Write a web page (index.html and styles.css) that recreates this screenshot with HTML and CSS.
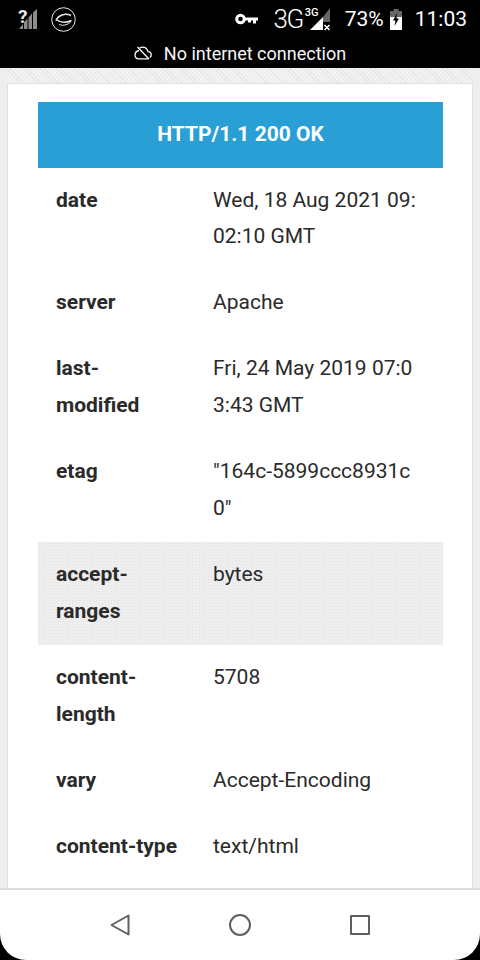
FILE: index.html
```html
<!DOCTYPE html>
<html lang="en">
<head>
    <meta charset="UTF-8">
    <meta name="viewport" content="width=device-width, initial-scale=1.0">
    <title>HTTP headers</title>
    <link rel="stylesheet" href="styles.css">
</head>
<body>
    <div class="phone">
        <div class="top-bar">
            <div class="status-bar">
                <div class="status-left">
                    <div class="signal-grey">
                        <svg width="18" height="20" viewBox="0 0 18 20">
                            <path d="M0 20 L4 15 V20zM5 20V13.500L8.500 9.500V20zM9.500 20V8.500L13 4.500V20zM14 20V3.500L18 0V20z" fill="#8c8c8c"/>
                        </svg>
                        <span class="unknown-mark">?</span>
                    </div>
                    <svg class="planet" width="25" height="25" viewBox="0 0 25 25" fill="none" stroke="#e8e8e8">
                        <circle cx="12.500" cy="12.500" r="11.800" stroke-width="1"/>
                        <path d="M5 13.500C7 8.500 14 5.500 20 8.500" stroke-width="1.500"/>
                        <path d="M5 12.500c4 3 10 3.500 15.500 1" stroke-width="1.500"/>
                        <path d="M8 17.500c4 1.500 9 .5 12-3" stroke-width="1"/>
                    </svg>
                </div>
                <div class="status-right">
                    <svg class="key" width="23" height="12" viewBox="0 0 23 12">
                        <circle cx="5.500" cy="6" r="3.800" fill="none" stroke="#fff" stroke-width="3"/>
                        <path d="M9 4.500h14v3h-2v3h-3v-3h-2v2h-3v-2H9z" fill="#fff"/>
                    </svg>
                    <span class="net-label">3G</span>
                    <div class="net-signal">
                        <span class="net-small">3G</span>
                        <svg width="24" height="28" viewBox="0 0 24 28">
                            <path d="M1 25 L14 12 V25Z" fill="#fff"/>
                            <path d="M14 12 L21 3 V17 H14Z" fill="#666"/>
                            <path d="M15.500 20l5 5M20.500 20l-5 5" stroke="#fff" stroke-width="1.600"/>
                        </svg>
                    </div>
                    <span class="battery-pct">73%</span>
                    <svg class="battery" width="12" height="21" viewBox="0 0 12 21">
                        <path d="M3.500 0h5v2H12v6H0V2h3.500z" fill="#666"/>
                        <path d="M0 8h12v13H0z" fill="#fff"/>
                        <path d="M7 4 L3 11.500h2.500L4.500 17 9 9.500H6.500z" fill="#000"/>
                    </svg>
                    <span class="clock">11:03</span>
                </div>
            </div>
            <div class="offline-bar">
                <svg width="18" height="14" viewBox="0 0 18 14" fill="none" stroke="#fff" stroke-width="1.300">
                    <path d="M5 4.500C3 5 1 6.500 1 9c0 2.300 1.800 3.800 4 3.800h9.500M16 11.500c.7-.6 1.200-1.400 1.200-2.500 0-1.800-1.500-3.200-3.200-3.300C13.300 3 11 1.200 8.500 1.200c-1 0-2 .3-2.800.8"/>
                    <path d="M3.500 1l11.500 12"/>
                </svg>
                <span>No internet connection</span>
            </div>
        </div>

        <div class="page">
            <div class="page-strip"></div>
            <div class="card">
                <table class="headers">
                    <colgroup>
                        <col class="name-col">
                        <col>
                    </colgroup>
                    <thead>
                        <tr><th colspan="2" class="response-line">HTTP/1.1 200 OK</th></tr>
                    </thead>
                    <tbody>
                        <tr><th>date</th><td>Wed, 18 Aug 2021 09:02:10 GMT</td></tr>
                        <tr><th>server</th><td>Apache</td></tr>
                        <tr><th>last-modified</th><td>Fri, 24 May 2019 07:03:43 GMT</td></tr>
                        <tr><th>etag</th><td>"164c-5899ccc8931c0"</td></tr>
                        <tr class="active"><th>accept-ranges</th><td>bytes</td></tr>
                        <tr><th>content-length</th><td>5708</td></tr>
                        <tr><th>vary</th><td>Accept-Encoding</td></tr>
                        <tr><th>content-type</th><td>text/html</td></tr>
                    </tbody>
                </table>
            </div>
        </div>

        <div class="nav-bar">
            <svg width="20" height="22" viewBox="0 0 20 22" fill="none" stroke="#5f5f5f" stroke-width="2" stroke-linejoin="round">
                <path d="M18.500 1.500v19L1.500 11z"/>
            </svg>
            <svg width="22" height="22" viewBox="0 0 22 22" fill="none" stroke="#5f5f5f" stroke-width="2">
                <circle cx="11" cy="11" r="10"/>
            </svg>
            <svg width="20" height="20" viewBox="0 0 20 20" fill="none" stroke="#5f5f5f" stroke-width="2" stroke-linejoin="round">
                <path d="M1 1h18v18H1z"/>
            </svg>
        </div>
    </div>
</body>
</html>
```

FILE: styles.css
```css
* {
    box-sizing: border-box;
}
html, body {
    margin: 0;
    padding: 0;
    background-color: #000000;
}
body {
    font-family: Roboto, "Liberation Sans", sans-serif;
}
.phone {
    width: 480px;
    height: 960px;
    display: flex;
    flex-direction: column;
    overflow: hidden;
    background-color: #000000;
}

/* status bar */
.top-bar {
    height: 68px;
    flex: none;
    background-color: #000000;
    color: #ffffff;
}
.status-bar {
    height: 38px;
    display: flex;
    justify-content: space-between;
    align-items: center;
    padding: 0 13px 0 19px;
}
.status-left, .status-right, .net-signal {
    display: flex;
    align-items: center;
}
.signal-grey {
    position: relative;
    width: 18px;
    height: 20px;
    margin-right: 14px;
}
.signal-grey svg {
    display: block;
}
.unknown-mark {
    position: absolute;
    left: -1px;
    top: -4px;
    font-size: 19px;
    font-weight: 700;
    color: #e8e8e8;
}
.key {
    margin-right: 15px;
}
.net-label {
    font-size: 26px;
    font-weight: 300;
    letter-spacing: -1.5px;
    margin-right: 1px;
}
.net-signal {
    position: relative;
    width: 30px;
    height: 28px;
    margin-right: 11px;
}
.net-signal svg {
    margin-left: 5px;
}
.net-small {
    position: absolute;
    left: 1px;
    top: 1px;
    font-size: 11px;
    font-weight: 500;
}
.battery-pct {
    font-size: 21px;
    margin-right: 6px;
}
.battery {
    margin-right: 13px;
}
.clock {
    font-size: 21px;
}
.offline-bar {
    height: 30px;
    display: flex;
    justify-content: center;
    align-items: center;
    gap: 12px;
    font-size: 18px;
    color: #f5f5f5;
}

/* page */
.page {
    flex: 1;
    min-height: 0;
    overflow: hidden;
    padding: 0 7px;
    background-color: #eeeeee;
}
.page-strip {
    height: 15px;
    background-color: #eeeeee;
    background-image: repeating-linear-gradient(45deg, #e6e6e6 0, #e6e6e6 1px, #f3f3f3 1px, #f3f3f3 3px);
}
.card {
    height: 100%;
    padding: 18px 30px 0;
    background-color: #ffffff;
    border: 1px solid #e0e0e0;
    border-bottom: none;
}
.headers {
    width: 405px;
    table-layout: fixed;
    border-collapse: collapse;
    font-size: 21px;
    line-height: 36.75px;
    color: #2a2a2a;
}
.name-col {
    width: 157px;
}
.headers th, .headers td {
    padding: 13.5px 18px 15.8px;
    text-align: left;
    vertical-align: top;
}
.headers th {
    font-weight: 700;
}
.headers td {
    font-weight: 400;
    word-break: break-all;
}
.headers .response-line {
    height: 66px;
    text-align: center;
    color: #ffffff;
    background-color: #2a9fd6;
}
.headers .active th, .headers .active td {
    background-color: #eeeeee;
    background-image: radial-gradient(circle, #e2e2e2 0.8px, transparent 1px);
    background-size: 3px 3px;
}

/* navigation */
.nav-bar {
    height: 72px;
    flex: none;
    display: flex;
    justify-content: center;
    align-items: center;
    gap: 99px;
    background-color: #ffffff;
    border-top: 2px solid #dddddd;
    border-radius: 0 0 26px 26px;
}
```
